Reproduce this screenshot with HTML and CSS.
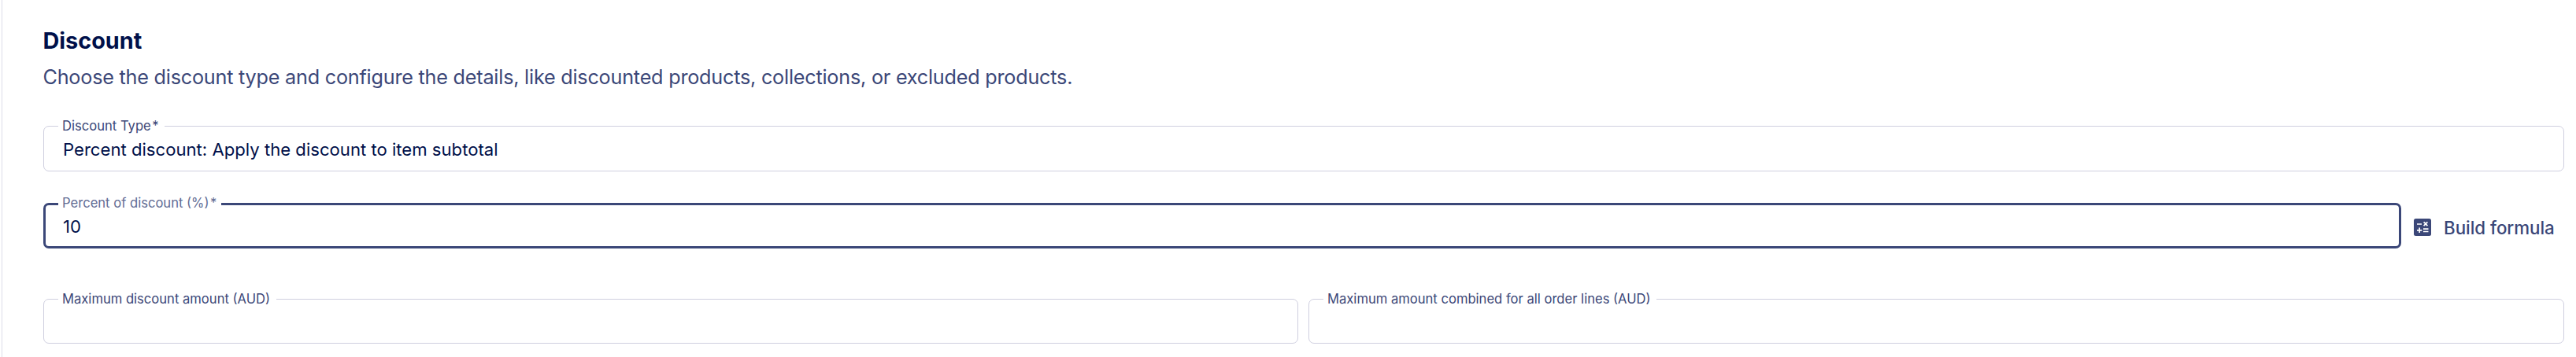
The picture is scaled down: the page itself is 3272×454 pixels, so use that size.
FILE: index.html
```
<!DOCTYPE html>
<html lang="en">
<head>
<meta charset="utf-8">
<title>Discount</title>
<link rel="stylesheet" href="styles.css">
</head>
<body>
<main class="panel">
  <h2 class="title">Discount</h2>
  <p class="subtitle">Choose the discount type and configure the details, like discounted products, collections, or excluded products.</p>
  <div class="field field-type"><span class="label">Discount Type<span class="star">*</span></span><span class="value">Percent discount: Apply the discount to item subtotal</span></div>
  <div class="row row-percent">
    <div class="field focused"><span class="label">Percent of discount (%)<span class="star">*</span></span><span class="value">10</span></div>
    <div class="build">
      <svg class="icon" viewBox="0 0 22 22"><rect width="22" height="22" rx="2.5" fill="#3b4778"/><path d="M4 7h6M4 14.8h6.4M7.2 11.6v6.4M12 13.2h6.5M12 16.5h6.5M12.6 4.4l4.8 4.8M17.4 4.4l-4.8 4.8" stroke="#fff" stroke-width="1.7" fill="none"/></svg>
      <span class="build-text">Build formula</span>
    </div>
  </div>
  <div class="row row-max">
    <div class="field"><span class="label">Maximum discount amount (AUD)</span></div>
    <div class="field"><span class="label">Maximum amount combined for all order lines (AUD)</span></div>
  </div>
</main>
</body>
</html>
```
FILE: styles.css
```
* { box-sizing: border-box; }
body { margin: 0; background: #fff; font-family: Inter, "Liberation Sans", sans-serif; }
.panel { margin-left: 2px; height: 454px; border-left: 1px solid #dcdce8; padding: 34px 15px 0 52px; }
.title { margin: 0 0 0 -0.5px; font-size: 28.8px; line-height: 36px; font-weight: 700; color: #00104a; }
.subtitle { margin: 10px 0 0 -0.5px; font-size: 25.2px; letter-spacing: -0.215px; line-height: 36px; color: #3b4778; }
.field { position: relative; height: 58px; border: 1px solid #cfcfdf; border-radius: 7px; padding: 2px 0 0 24px; display: flex; align-items: center; flex: 1; }
.field-type { margin-top: 44px; }
.label { position: absolute; left: 18px; top: -11px; padding: 0 7.5px 0 5px; background: #fff; font-size: 16.6px; line-height: 20px; color: #3b4778; white-space: nowrap; }
.star { margin-left: 1.5px; }
.value { font-size: 22.14px; line-height: 28px; color: #00104a; }
.row { display: flex; }
.row-percent { margin-top: 40px; }
.row-max { margin-top: 64px; gap: 13px; }
.row-max .field { height: 57px; }
.row-max .field:first-child { flex: 0 0 1594px; }
.focused { border: 3px solid #3b4778; padding-left: 22px; }
.focused .label { left: 16px; top: -13px; padding-right: 6px; color: #626c94; }
.build { width: 207px; display: flex; align-items: center; padding: 4px 0 0 16px; }
.icon { width: 22px; height: 22px; }
.build-text { margin-left: 16px; font-size: 22.3px; font-weight: 450; color: #3b4778; white-space: nowrap; }
```
